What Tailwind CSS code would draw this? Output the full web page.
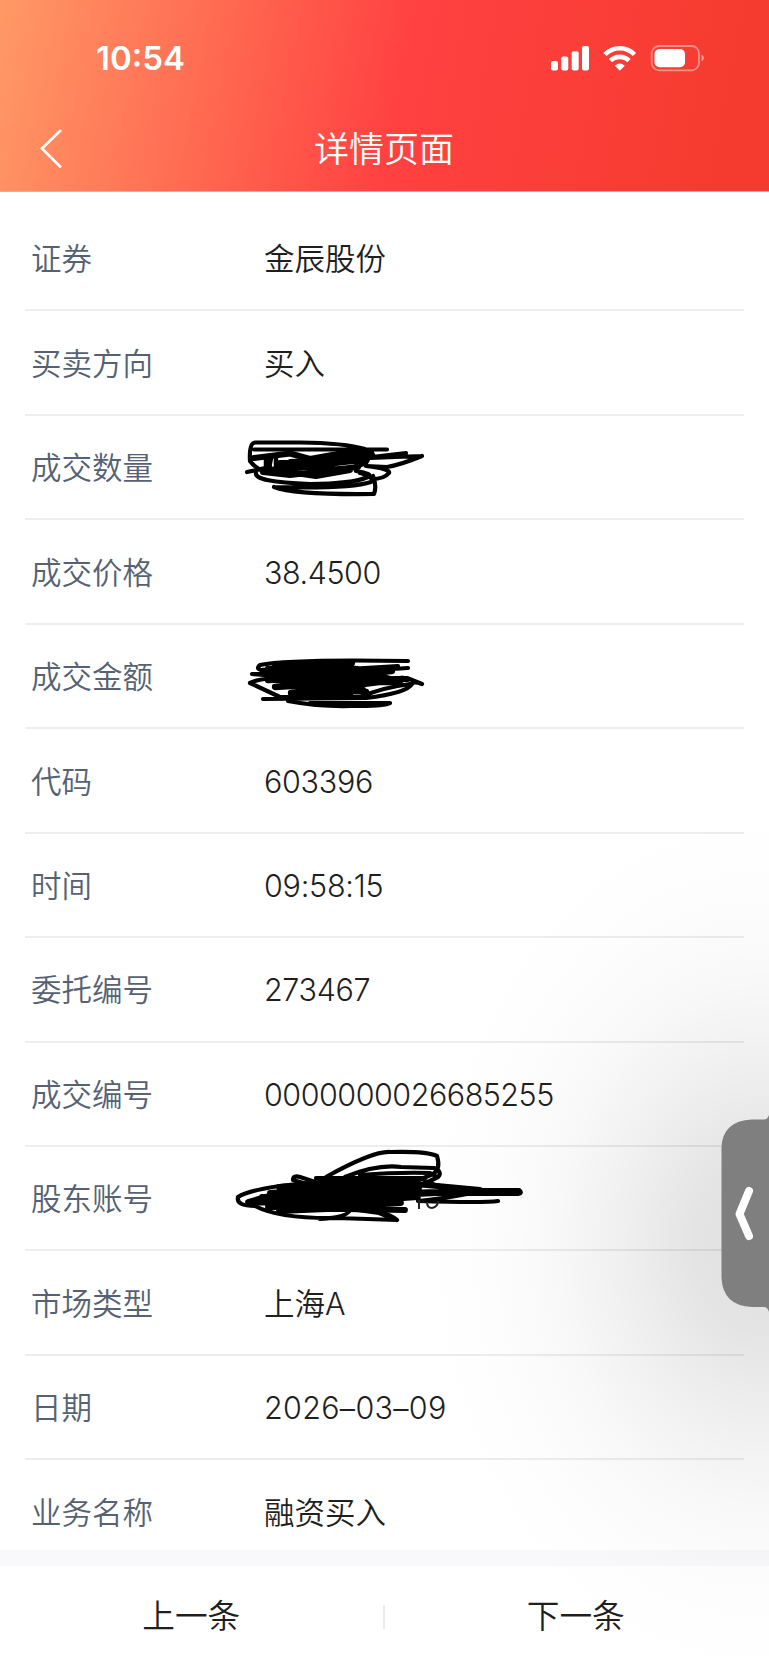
<!DOCTYPE html>
<html lang="zh-CN">

<head>
    <meta charset="UTF-8">
    <meta name="viewport" content="width=device-width, initial-scale=1.0">
    <title>详情页面</title>
    <script src="https://cdn.jsdelivr.net/npm/@tailwindcss/browser@4"></script>
</head>

<body class="bg-white font-['Inter','Noto_Sans_CJK_SC',sans-serif] font-[350]">
    <div class="relative flex h-[1665px] w-[769px] flex-col overflow-hidden">

        <!-- Header: status bar + title -->
        <header class="h-[192px] shrink-0 border-b border-[#f8a49c] bg-[linear-gradient(101deg,#ff9966_0%,#ff6b52_27%,#ff4141_52%,#f53b2f_95%)] text-white">
            <div class="flex h-[115px] items-center justify-between pl-[96px] pr-[65px]">
                <span class="pt-px text-[33px] font-semibold leading-none">10:54</span>
                <svg class="h-[30px] w-[156px]" viewBox="548 42 156 30" fill="none">
                    <g fill="#fff">
                        <rect x="551" y="60" width="7" height="9.5" rx="2" />
                        <rect x="561.3" y="55.5" width="7" height="14" rx="2" />
                        <rect x="571.7" y="50.3" width="7" height="19.2" rx="2" />
                        <rect x="582" y="45" width="7" height="24.5" rx="2" />
                    </g>
                    <path d="M605 53.5a20.5 20.5 0 0 1 29.500 0" stroke="#fff" stroke-width="4.600" />
                    <path d="M610.500 59.700a13 13 0 0 1 18.500 0" stroke="#fff" stroke-width="4.600" />
                    <path d="M614.800 64.700q5-4.600 10 0l-5 5z" fill="#fff" />
                    <rect x="651.700" y="45" width="47.300" height="24.300" rx="7.500" stroke="#fff" stroke-opacity=".42" stroke-width="1.800" />
                    <rect x="654.500" y="48" width="30.500" height="18.300" rx="5" fill="#fff" />
                    <path d="M701.500 53.500q5 3.500 0 7z" fill="#fff" fill-opacity=".5" />
                </svg>
            </div>
            <div class="flex h-[66px] items-center justify-center px-10">
                <svg class="h-10 w-6" viewBox="40 128 24 40" fill="none" stroke="#fff" stroke-width="2.600">
                    <path d="M61 130L42 148.500L61 167.500" />
                </svg>
                <h1 class="flex-1 pr-[25px] pt-[2px] text-center text-[35px] font-[350] leading-none">详情页面</h1>
            </div>
        </header>

        <!-- Detail rows -->
        <main id="rows" class="h-[1358px] shrink-0 overflow-hidden px-[25px] pt-[15px] text-[30.5px]"></main>

        <div class="h-[16px] shrink-0 bg-[#f9f9fc]"></div>

        <!-- Prev / next -->
        <footer class="flex flex-1 items-center pr-[2px] pt-[2px] text-center text-[32.7px] text-[#1f1f1f]">
            <button class="flex-1">上一条</button>
            <span class="h-6 w-[2px] bg-[#ebebeb]"></span>
            <button class="flex-1">下一条</button>
        </footer>

        <!-- Shadow cast by the side handle -->
        <div class="pointer-events-none absolute right-0 top-[750px] h-[915px] w-[400px] bg-[radial-gradient(ellipse_340px_440px_at_98%_54%,rgba(0,0,0,.12),rgba(0,0,0,.105)_20%,rgba(0,0,0,.064)_40%,rgba(0,0,0,.026)_60%,rgba(0,0,0,.009)_80%,transparent)]"></div>

        <svg class="absolute right-0 top-[1110px] h-[206px] w-[50px]" viewBox="719 1110 50 206" fill="none">
            <path d="M769 1115Q767.500 1119.500 764 1119.500H752Q722 1121 721.500 1148V1278Q723 1306 752 1307H764Q767.500 1307 769 1312Z" fill="#7f7f7f" />
            <path d="M749 1191L739.500 1214L749 1236" stroke="#fff" stroke-width="8" stroke-linecap="round" stroke-linejoin="round" />
        </svg>

        <!-- Marker scribbles over the hidden values -->
        <svg class="pointer-events-none absolute inset-0" width="769" height="1665" fill="none" stroke="#000" stroke-width="4.200" stroke-linecap="round" stroke-linejoin="round">
            <path d="M387 449.500H254M365 449Q345 443 300 442.500H255Q249 443 250 461Q254 467 265 472" />
            <path d="M406 453L372 457M422 456L370 458L290 461M422 456Q400 465 387 467L366 466Q391 469 389 473Q384 479 372 479L366 474" />
            <path d="M247 472L270 467M256 473Q254 482 310 484Q352 484 368 477Q374 474 356 471M274 487Q350 489 371 482Q376 477 360 473M274 487Q295 495 374 494Q377 486 373 476" />
            <path d="M254 458L290 453.500L310 459L360 450L372 455L312 461L263 472L290 475L358 467L362 460L275 470L316 476L350 470L300 467L280 463L338 463" stroke-width="6.200" />
            <path d="M350 449L372 452L366 463L340 472M266 459V469M271 458L269 468M276 459V466" stroke-width="4.500" />

            <path d="M408 661Q289 659 260 665Q251 671 282 673L398 666M408 668L315 674L252 674L330 680H408" />
            <path d="M250 683Q262 677 285 679L407 678L422 684Q413 681 412 684Q407 693 366 698L263 699M250 683L280 697H360Q385 687 410 684" />
            <path d="M288 701Q320 707 352 706Q383 706 390 703H310" />
            <path d="M275 667L352 663L263 671L392 671L268 680L378 675L275 687L403 679L291 693L363 690L298 697L350 695M268 669L356 669L400 682L287 682L366 692" stroke-width="6.300" />

            <path d="M326 1177Q373 1151 390 1152Q427 1151 437 1156Q441 1169 433 1174L405 1186M345 1177Q377 1164 401 1167L434 1168Q443 1172 438 1177L424 1184M360 1175Q400 1172 430 1173L437 1177" />
            <path d="M310 1185L293 1180Q293 1175 300 1177L340 1190M316 1178L422 1178Q430 1188 480 1190H519Q523 1193 518 1194L420 1194M498 1201Q485 1203 418 1201Q458 1197 478 1191" />
            <path d="M307 1183Q252 1188 238 1197Q236 1206 255 1206Q280 1219 337 1218L397 1220L379 1213L350 1209Q350 1217 320 1219M397 1220Q390 1213 362 1208L405 1210" />
            <path d="M248 1202L310 1184L414 1179L279 1187L419 1188L262 1197L473 1191L251 1203L418 1197L268 1207L401 1203L285 1208L405 1210M270 1193L405 1183L480 1190M279 1211L351 1208M320 1180L405 1182M330 1185L416 1191M330 1190L405 1198" stroke-width="5.800" />
            <path d="M419 1200V1209M427 1202Q427 1208 432 1208Q438 1207 438 1201" stroke="#222" stroke-width="2" stroke-linecap="butt" />
        </svg>
    </div>

    <script>
        const rows = [
            ["证券", "金辰股份"],
            ["买卖方向", "买入"],
            ["成交数量", ""],
            ["成交价格", "38.4500", "tracking-[-0.45px]"],
            ["成交金额", ""],
            ["代码", "603396", "tracking-[-0.3px]"],
            ["时间", "09:58:15", "tracking-[-0.25px]"],
            ["委托编号", "273467", "tracking-[-0.35px]"],
            ["成交编号", "0000000026685255", "tracking-[-0.5px]"],
            ["股东账号", ""],
            ["市场类型", "上海A"],
            ["日期", "2026–03–09", "tracking-[0.3px]"],
            ["业务名称", "融资买入"],
        ];
        document.getElementById("rows").innerHTML = rows.map(([label, value, style = ""]) => `
            <div class="flex h-[104.45px] items-center border-b-2 border-[#ededed] px-[6px] pt-[2px] last:border-transparent">
                <span class="w-[233px] text-[#566273]">${label}</span>
                <span class="text-[#1f1f1f] ${style}">${value}</span>
            </div>`).join("");
    </script>
</body>

</html>
